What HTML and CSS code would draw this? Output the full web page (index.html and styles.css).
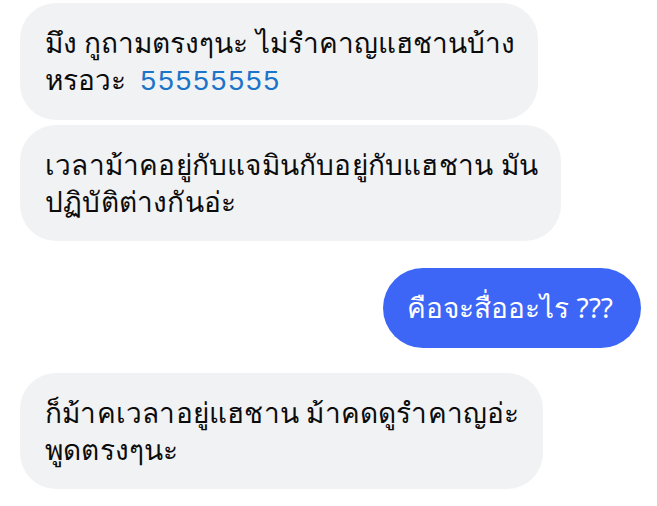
FILE: index.html
```html
<!DOCTYPE html>
<html lang="th">
<head>
<meta charset="utf-8">
<link rel="stylesheet" href="styles.css">
</head>
<body>
<div class="chat">
  <div class="bubble in">มึง กูถามตรงๆนะ ไม่รำคาญแฮชานบ้าง<br>หรอวะ&nbsp; <span class="num">55555555</span></div>
  <div class="bubble in wide">เวลาม้าคอยู่กับแจมินกับอยู่กับแฮชาน มัน<br>ปฏิบัติต่างกันอ่ะ</div>
  <div class="bubble out">คือจะสื่ออะไร ???</div>
  <div class="bubble in wide">ก็ม้าคเวลาอยู่แฮชาน ม้าคดดูรำคาญอ่ะ<br>พูดตรงๆนะ</div>
</div>
</body>
</html>
```

FILE: styles.css
```css
html, body {
  margin: 0;
  padding: 0;
  background: #ffffff;
}
body {
  width: 657px;
  height: 506px;
  overflow: hidden;
  font-family: "Noto Sans", "DejaVu Sans", sans-serif;
}
.chat {
  display: flex;
  flex-direction: column;
  align-items: flex-start;
  padding: 3px 16px 0 20px;
}
.bubble {
  box-sizing: border-box;
  font-size: 28px;
  line-height: 37px;
  color: #0c0c0c;
  padding: 21px 23px 21px 25px;
  border-radius: 36px;
  white-space: nowrap;
}
.in {
  background: #f1f2f4;
  margin-bottom: 5px;
}
.wide {
  letter-spacing: 0.2px;
}
.num {
  color: #1c74c9;
  font-family: "Liberation Sans", Arial, sans-serif;
  letter-spacing: 2px;
}
.out {
  align-self: flex-end;
  background: #3d66f6;
  color: #ffffff;
  border-radius: 40px;
  height: 80px;
  padding: 21px 28px 21px 24px;
  margin-top: 22px;
  margin-bottom: 25px;
}
```
